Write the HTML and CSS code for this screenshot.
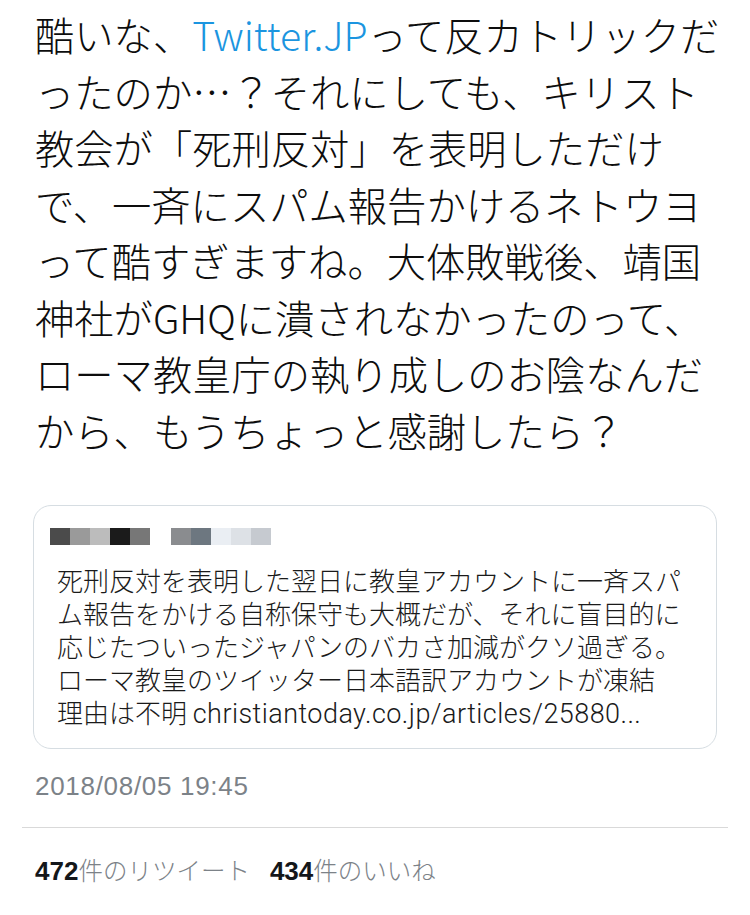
FILE: index.html
```html
<!DOCTYPE html>
<html lang="ja">
<head>
<meta charset="utf-8">
<link rel="stylesheet" href="styles.css">
</head>
<body>
<div class="tweet">
  <p class="tweet-text">酷いな、<span class="link">Twitter.JP</span>って反カトリックだ<br>ったのか…？それにしても、キリスト<br>教会が「死刑反対」を表明しただけ<br>で、一斉にスパム報告かけるネトウヨ<br>って酷すぎますね。大体敗戦後、靖国<br>神社がGHQに潰されなかったのって、<br>ローマ教皇庁の執り成しのお陰なんだ<br>から、もうちょっと感謝したら？</p>

  <div class="quote">
    <div class="quote-name">
      <div class="mosaic">
        <span class="px" style="background:#4b4b4b"></span>
        <span class="px" style="background:#9a9a9a"></span>
        <span class="px" style="background:#bcbcbc"></span>
        <span class="px" style="background:#1b1b1b"></span>
        <span class="px" style="background:#777777"></span>
      </div>
      <div class="mosaic">
        <span class="px" style="background:#8a8c8f"></span>
        <span class="px" style="background:#6d7780"></span>
        <span class="px" style="background:#eaeef3"></span>
        <span class="px" style="background:#dde1e6"></span>
        <span class="px" style="background:#c6cad0"></span>
      </div>
    </div>
    <p class="quote-text">死刑反対を表明した翌日に教皇アカウントに一斉スパ<br>ム報告をかける自称保守も大概だが、それに盲目的に<br>応じたついったジャパンのバカさ加減がクソ過ぎる。<br>ローマ教皇のツイッター日本語訳アカウントが凍結<br>理由は不明 <span class="url">christiantoday.co.jp/articles/25880...</span></p>
  </div>

  <div class="meta">2018/08/05 19:45</div>
  <div class="stats">
    <span class="stat"><b>472</b>件のリツイート</span>
    <span class="stat"><b>434</b>件のいいね</span>
  </div>
</div>
</body>
</html>
```

FILE: styles.css
```css
html, body {
  margin: 0;
  padding: 0;
  background: #ffffff;
}

body {
  font-family: "Noto Sans CJK JP", "Noto Sans", sans-serif;
  color: #14171a;
}

.tweet {
  width: 750px;
  height: 915px;
  overflow: hidden;
}

.tweet-text {
  margin: 0;
  padding: 6px 0 0 35px;
  font-size: 39.3px;
  font-weight: 300;
  line-height: 56.5px;
  white-space: nowrap;
  color: #0d0d0d;
}

.link {
  color: #1b95e0;
}

.quote {
  margin: 47px 33px 0 33px;
  border: 1px solid #d6dde2;
  border-radius: 18px;
  padding: 22px 16px 20px 16px;
}

.quote-name {
  display: flex;
  gap: 21px;
  height: 17px;
}

.mosaic {
  display: flex;
}

.px {
  display: block;
  width: 20px;
  height: 17px;
}

.quote-text {
  margin: 18px 0 0 7px;
  font-size: 26px;
  font-weight: 300;
  line-height: 33px;
  white-space: nowrap;
  color: #1a1a1a;
}

.url {
  font-family: Roboto, "Liberation Sans", sans-serif;
  font-weight: 300;
  font-size: 27px;
  letter-spacing: 0.45px;
  line-height: 1;
}

.meta {
  margin: 22px 22px 0 22px;
  padding: 0 0 26px 13px;
  font-family: "Liberation Sans", "Noto Sans CJK JP", sans-serif;
  font-size: 26px;
  letter-spacing: 0.7px;
  line-height: 30px;
  color: #7c8288;
  border-bottom: 1px solid #d9d9d9;
}

.stats {
  margin: 0 22px;
  padding: 27px 0 30px 13px;
  display: flex;
  gap: 20px;
  font-size: 24.5px;
  font-weight: 300;
  line-height: 30px;
  color: #7c8288;
  border-bottom: 1px solid #e1e8ed;
}

.stat b {
  font-family: "Liberation Sans", sans-serif;
  font-size: 26px;
  line-height: 1;
  font-weight: 700;
  color: #14171a;
}
```
